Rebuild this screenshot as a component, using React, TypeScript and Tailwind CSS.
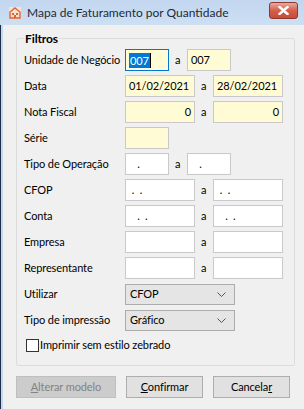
import React from 'react';

const FONT = "font-['Lato','Segoe_UI',sans-serif]";

function Field({ value = '', w, yellow = false, right = false, focused = false, selected = false }: { value?: string; w: string; yellow?: boolean; right?: boolean; focused?: boolean; selected?: boolean }) {
  return (
    <div
      className={`${w} h-[22px] border flex items-center px-[3px] ${right ? 'justify-end' : ''} ${yellow ? 'bg-[#fffbd5]' : 'bg-white'} ${focused ? 'border-[#0078d7]' : 'border-[#c9c9c9]'}`}
    >
      {selected ? (
        <span className="flex items-center">
          <span className="bg-[#0078d7] text-white leading-[15px] px-[1px]">{value}</span>
          <span className="w-px h-[15px] bg-black" />
        </span>
      ) : (
        <span className="whitespace-pre">{value}</span>
      )}
    </div>
  );
}

function Row({ label, children }: { label: string; children: React.ReactNode }) {
  return (
    <div className="flex items-center h-[22px]">
      <div className="w-[101px] shrink-0 whitespace-nowrap">{label}</div>
      {children}
    </div>
  );
}

function Pair({ a, b }: { a: React.ReactNode; b: React.ReactNode }) {
  return (
    <div className="flex items-center">
      {a}
      <span className="w-[18px] pl-[6px]">a</span>
      {b}
    </div>
  );
}

function Select({ value }: { value: string }) {
  return (
    <div className="w-[110px] h-[21px] bg-[#e5e5e5] border border-[#acacac] flex items-center justify-between pl-[4px] pr-[8px]">
      <span>{value}</span>
      <svg width="9" height="6" viewBox="0 0 9 6" className="mt-[1px]">
        <path d="M0.5 0.5 L4.5 4.5 L8.5 0.5" fill="none" stroke="#555" strokeWidth="1" />
      </svg>
    </div>
  );
}

function Btn({ children, disabled = false, w }: { children: React.ReactNode; disabled?: boolean; w: string }) {
  return (
    <div
      className={`${w} h-[22px] border flex items-center justify-center ${disabled ? 'bg-[#cccccc] border-[#bfbfbf] text-[#838383]' : 'bg-[#e1e1e1] border-[#adadad] text-black'}`}
    >
      {children}
    </div>
  );
}

export default function App() {
  return (
    <div className={`w-[304px] h-[409px] bg-[#c5d9f1] flex flex-col overflow-hidden text-[11px] tracking-[-0.1px] text-black ${FONT}`}>
      <div className="h-[25px] shrink-0 flex items-center bg-gradient-to-b from-[#c2d6ef] to-[#cddff3]">
        <svg width="12" height="12" viewBox="0 0 12 12" className="ml-[9px] mt-[1px]">
          <rect x="0" y="0" width="12" height="12" fill="#f6e3d6" />
          <path d="M6 1 L11 5 L11 11 L1 11 L1 5 Z" fill="none" stroke="#e0622c" strokeWidth="1.4" />
          <rect x="3" y="6" width="2" height="2" fill="#e0622c" />
          <rect x="7" y="6" width="2" height="2" fill="#e0622c" />
          <rect x="5" y="8" width="2" height="3" fill="#e0622c" />
        </svg>
        <span className="ml-[6px] text-[12px] tracking-normal text-[#1e2a3a] mt-[1px]">Mapa de Faturamento por Quantidade</span>
        <div className="ml-auto mr-[6px] w-[29px] h-[17px] rounded-[3px] border border-[#8b3a2e] bg-gradient-to-b from-[#e9a99c] via-[#d2604d] to-[#c94a35] flex items-center justify-center mt-[-4px]">
          <svg width="11" height="9" viewBox="0 0 11 9">
            <path d="M1.5 1 L9.5 8 M9.5 1 L1.5 8" stroke="#fff" strokeWidth="2.4" strokeLinecap="square" />
          </svg>
        </div>
      </div>
      <div className="flex flex-1">
        <div className="w-px bg-[#1f2d48]" />
        <div className="w-[2px] bg-[#c5d9f1]" />
        <div className="flex-1 bg-[#f0f0f0] pl-[13px] pr-[9px] pt-[6px]">
          <fieldset className="border border-[#dcdcdc] rounded-[2px] px-[7px] pb-[8px] h-[335px]">
            <legend className="px-[1px] font-bold text-[12px] leading-[15px]">Filtros</legend>
            <div className="flex flex-col gap-[4px] mt-[3px]">
              <Row label="Unidade de Negócio">
                <Pair a={<Field w="w-[44px]" yellow focused selected value="007" />} b={<Field w="w-[44px]" yellow value="007" />} />
              </Row>
              <Row label="Data">
                <Pair a={<Field w="w-[70px]" yellow value="01/02/2021" />} b={<Field w="w-[70px]" yellow value="28/02/2021" />} />
              </Row>
              <Row label="Nota Fiscal">
                <Pair a={<Field w="w-[70px]" yellow right value="0" />} b={<Field w="w-[70px]" yellow right value="0" />} />
              </Row>
              <Row label="Série">
                <Field w="w-[44px]" yellow />
              </Row>
              <Row label="Tipo de Operação">
                <Pair a={<Field w="w-[44px]" value="   ." />} b={<Field w="w-[44px]" value="   ." />} />
              </Row>
              <Row label="CFOP">
                <Pair a={<Field w="w-[70px]" value=" .  ." />} b={<Field w="w-[70px]" value=" .  ." />} />
              </Row>
              <Row label="Conta">
                <Pair a={<Field w="w-[70px]" value="   .  ." />} b={<Field w="w-[70px]" value="   .  ." />} />
              </Row>
              <Row label="Empresa">
                <Pair a={<Field w="w-[70px]" />} b={<Field w="w-[70px]" />} />
              </Row>
              <Row label="Representante">
                <Pair a={<Field w="w-[70px]" />} b={<Field w="w-[70px]" />} />
              </Row>
              <Row label="Utilizar">
                <Select value="CFOP" />
              </Row>
              <Row label="Tipo de impressão">
                <Select value="Gráfico" />
              </Row>
              <div className="flex items-center mt-[2px] ml-[2px]">
                <div className="w-[13px] h-[13px] border border-[#333] bg-white" />
                <span className="ml-[1px]">Imprimir sem estilo zebrado</span>
              </div>
            </div>
          </fieldset>
          <div className="flex mt-[10px] gap-[10px]">
            <Btn w="w-[100px]" disabled>
              <span><span className="underline">A</span>lterar modelo</span>
            </Btn>
            <Btn w="w-[77px]">
              <span><span className="underline">C</span>onfirmar</span>
            </Btn>
            <Btn w="w-[77px]">
              <span>Cancela<span className="underline">r</span></span>
            </Btn>
          </div>
        </div>
      </div>
    </div>
  );
}
